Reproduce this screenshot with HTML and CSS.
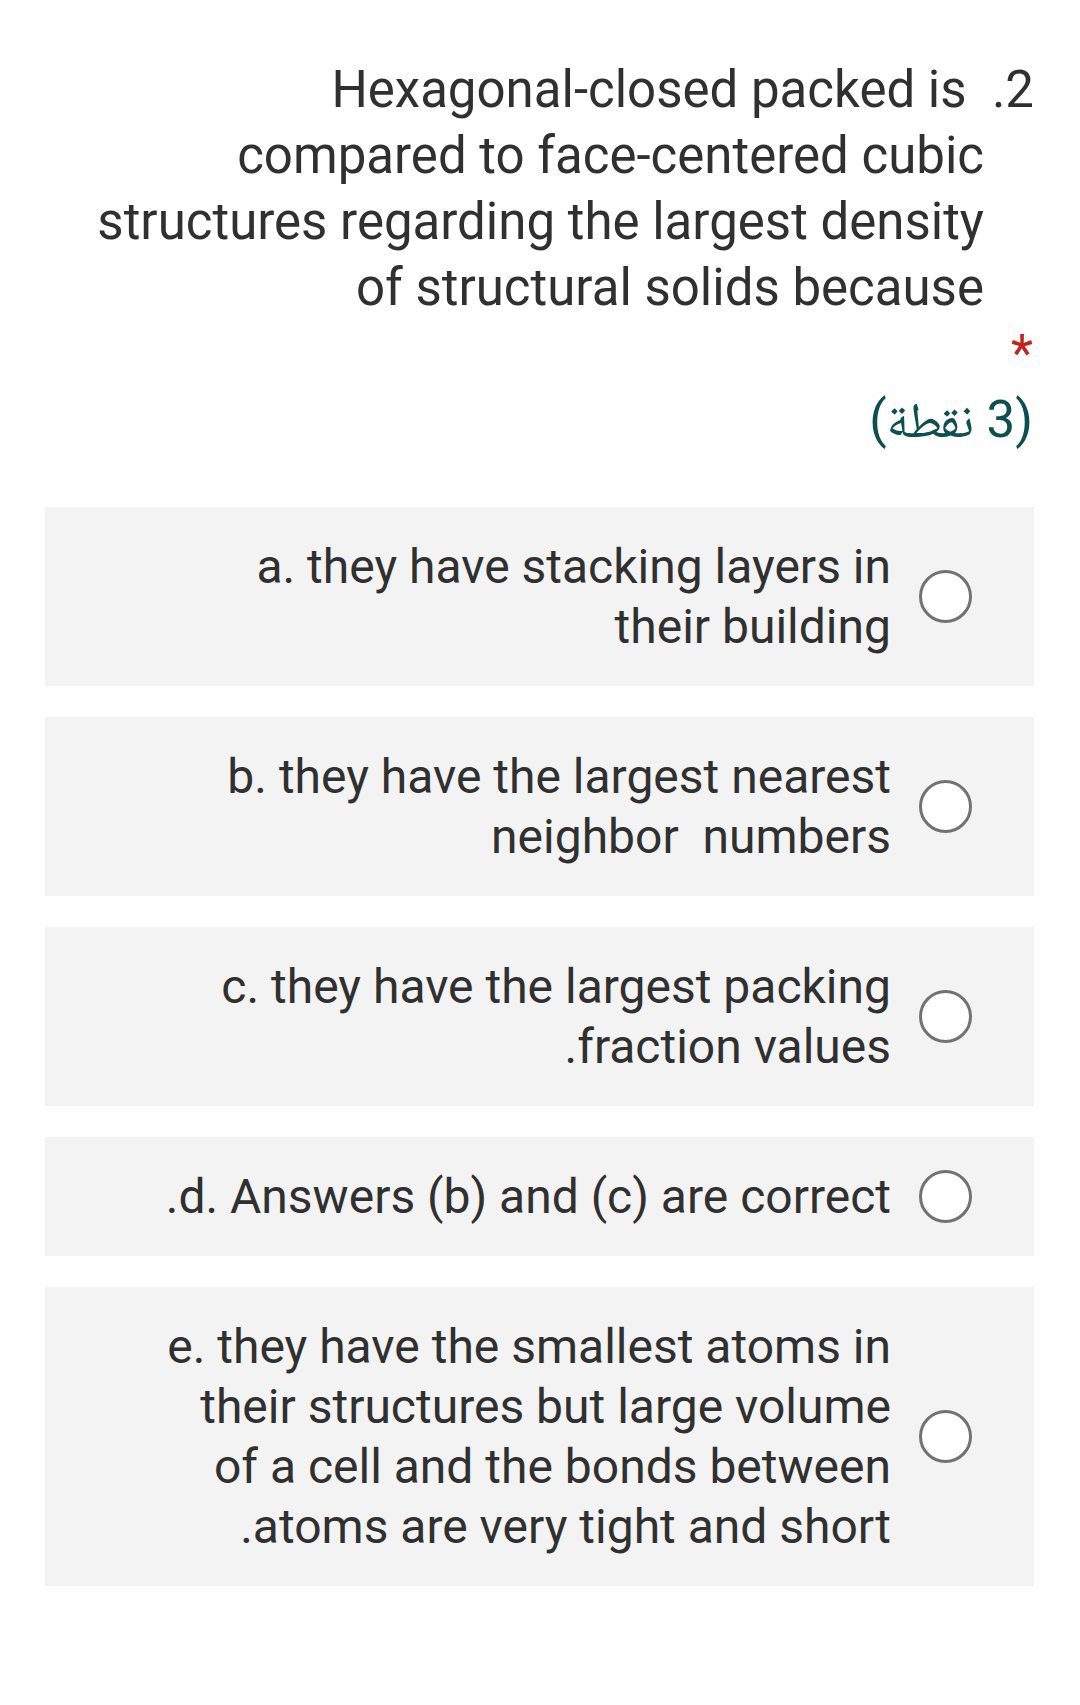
FILE: index.html
```html
<!DOCTYPE html>
<html lang="ar" dir="rtl">
<head>
<meta charset="utf-8">
<link rel="stylesheet" href="styles.css">
</head>
<body>
<main class="page">
  <div class="question-head">
    <div class="title">2.&nbsp; Hexagonal-closed packed is<br>compared to face-centered cubic structures regarding the largest density of structural solids because</div>
    <div class="required">*</div>
    <div class="points">(3 <span class="points-word">نقطة</span>)</div>
  </div>
  <div class="options">
    <label class="option">
      <span class="radio"></span>
      <span class="option-text">a. they have stacking layers in their building</span>
    </label>
    <label class="option">
      <span class="radio"></span>
      <span class="option-text">b. they have the largest nearest neighbor&nbsp; numbers</span>
    </label>
    <label class="option">
      <span class="radio"></span>
      <span class="option-text">c. they have the largest packing fraction values.</span>
    </label>
    <label class="option">
      <span class="radio"></span>
      <span class="option-text">d. Answers (b) and (c) are correct.</span>
    </label>
    <label class="option">
      <span class="radio"></span>
      <span class="option-text">e. they have the smallest atoms in their structures but large volume of a cell and the bonds between atoms are very tight and short.</span>
    </label>
  </div>
</main>
</body>
</html>
```
FILE: styles.css
```css
html, body {
  margin: 0;
  padding: 0;
  background: #ffffff;
}

body {
  font-family: Roboto, "Noto Sans", "DejaVu Sans", sans-serif;
  color: #333333;
  width: 1080px;
  height: 1705px;
  overflow: hidden;
}

.page {
  padding: 57px 46px 0 45px;
}

.question-head {
  font-size: 51px;
  line-height: 66px;
}

.title {
  padding-right: 50px;
  padding-left: 34px;
  text-indent: -50px;
  color: #303030;
}

.required {
  color: #c5221f;
  text-align: right;
  padding-right: 1px;
  height: 66px;
}

.points {
  color: #0d4f4f;
  text-align: right;
  padding-right: 1px;
  height: 66px;
}

.points-word {
  font-family: "Noto Naskh Arabic", "Noto Sans Arabic", "DejaVu Sans", sans-serif;
  font-size: 50px;
  line-height: 0;
}

.options {
  margin-top: 54px;
  display: flex;
  flex-direction: column;
  gap: 31px;
}

.option {
  display: flex;
  flex-direction: row;
  align-items: center;
  gap: 28px;
  background: #f3f3f3;
  padding: 29.5px 62px 29.5px 114px;
  font-size: 48px;
  line-height: 60px;
}

.radio {
  flex: 0 0 auto;
  width: 47px;
  height: 47px;
  border: 3px solid #727272;
  border-radius: 50%;
  background: #ffffff;
}

.option-text {
  flex: 1 1 auto;
  text-align: right;
  color: #303030;
}
```
